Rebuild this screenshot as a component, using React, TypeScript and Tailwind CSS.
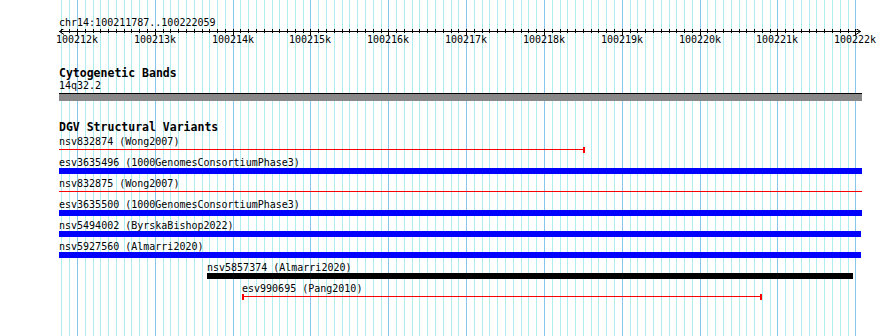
const KB = 77.83;
const MAJOR0 = 77;

// vertical grid, one line every 100 bp, darker line every kb
const gridLines: { x: number; major: boolean }[] = [];
for (let i = -2; i <= 100; i++) {
  const x = Math.round(MAJOR0 + (i * KB) / 10);
  if (x < 59 || x > 856) continue;
  gridLines.push({ x, major: i % 10 === 0 });
}

const rulerLabels = Array.from({ length: 11 }, (_, i) => ({
  x: Math.round(MAJOR0 + i * KB),
  text: `${100212 + i}k`,
}));

const Grid = () => (
  <svg className="absolute inset-0" width={890} height={336}>
    {gridLines.map((g) => (
      <rect
        key={g.x}
        x={g.x}
        y={0}
        width={1}
        height={336}
        fill={g.major ? "#86c6ec" : "#aeeef0"}
      />
    ))}
  </svg>
);

const Ruler = () => (
  <div className="relative h-[17px] w-[803px]">
    <svg className="absolute inset-0" width={803} height={17}>
      <rect x={0} y={2} width={802} height={1} fill="#000" />
      <path d="M0.5 2.5 L5 -0.5 M0.5 2.5 L5 5.5" stroke="#000" fill="none" />
      <path d="M801.5 2.5 L797 -0.5 M801.5 2.5 L797 5.5" stroke="#000" fill="none" />
      {gridLines.map((g) => (
        <rect
          key={g.x}
          x={g.x - 59}
          y={-1}
          width={1}
          height={g.major ? 8 : 5}
          fill="#000"
        />
      ))}
    </svg>
    {rulerLabels.map((l) => (
      <span
        key={l.text}
        className="absolute top-[5px] -translate-x-1/2 text-[10px] leading-[12px] whitespace-nowrap"
        style={{ left: l.x - 59 }}
      >
        {l.text}
      </span>
    ))}
  </div>
);

type Feature = {
  label: string;
  offset: string;
  width: string;
  kind: "bar-blue" | "bar-black" | "line";
  capLeft?: boolean;
  capRight?: boolean;
};

const features: Feature[] = [
  { label: "nsv832874 (Wong2007)", offset: "ml-0", width: "w-[526px]", kind: "line", capRight: true },
  { label: "esv3635496 (1000GenomesConsortiumPhase3)", offset: "ml-0", width: "w-[803px]", kind: "bar-blue" },
  { label: "nsv832875 (Wong2007)", offset: "ml-0", width: "w-[803px]", kind: "line" },
  { label: "esv3635500 (1000GenomesConsortiumPhase3)", offset: "ml-0", width: "w-[803px]", kind: "bar-blue" },
  { label: "nsv5494002 (ByrskaBishop2022)", offset: "ml-0", width: "w-[802px]", kind: "bar-blue" },
  { label: "nsv5927560 (Almarri2020)", offset: "ml-0", width: "w-[802px]", kind: "bar-blue" },
  { label: "nsv5857374 (Almarri2020)", offset: "ml-[148px]", width: "w-[646px]", kind: "bar-black" },
  { label: "esv990695 (Pang2010)", offset: "ml-[183px]", width: "w-[520px]", kind: "line", capLeft: true, capRight: true },
];

const FeatureRow = ({ f }: { f: Feature }) => (
  <div className={`${f.offset} mb-[4px]`}>
    <div className="h-[11px] text-[10px] leading-[11px] whitespace-nowrap">{f.label}</div>
    {f.kind === "line" ? (
      <div className={`${f.width} flex h-[6px] items-start`}>
        {f.capLeft && <span className="h-[6px] w-[2px] bg-[#ff0000]" />}
        <span className="mt-[2px] h-px flex-1 bg-[#ff0000]" />
        {f.capRight && <span className="h-[6px] w-[2px] bg-[#ff0000]" />}
      </div>
    ) : (
      <div
        className={`${f.width} h-[6px] ${f.kind === "bar-blue" ? "bg-[#0000ff]" : "bg-black"}`}
      />
    )}
  </div>
);

const TrackTitle = ({ children }: { children: string }) => (
  <div className="h-[13px] text-[11.5px] leading-[13px] font-bold whitespace-nowrap">
    {children}
  </div>
);

export default function App() {
  return (
    <div className="relative h-[336px] w-[890px] overflow-hidden bg-white font-['DejaVu_Sans_Mono',monospace] text-black">
      <Grid />
      <div className="relative pl-[59px] pt-[17px]">
        <div className="h-[12px] text-[10px] leading-[12px]">chr14:100211787..100222059</div>
        <Ruler />

        {/* cytobands */}
        <div className="mt-[21px]">
          <TrackTitle>Cytogenetic Bands</TrackTitle>
          <div className="h-[12px] text-[10px] leading-[12px]">14q32.2</div>
          <div className="mt-[1px] h-[8px] w-[803px] border-t border-black bg-[#888888]" />
        </div>

        {/* DGV */}
        <div className="mt-[20px]">
          <TrackTitle>DGV Structural Variants</TrackTitle>
          <div className="mt-[2px]">
            {features.map((f) => (
              <FeatureRow key={f.label} f={f} />
            ))}
          </div>
        </div>
      </div>
    </div>
  );
}
